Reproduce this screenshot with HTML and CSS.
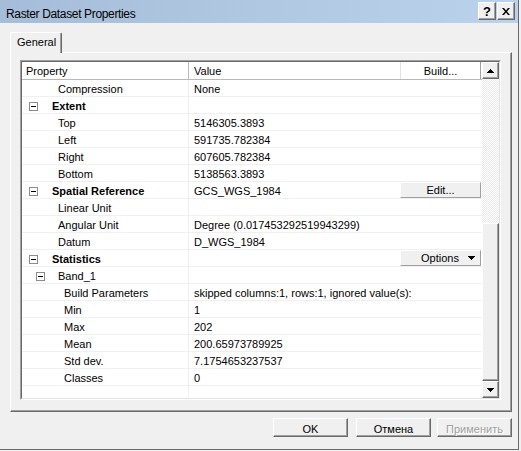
FILE: index.html
```html
<!DOCTYPE html>
<html lang="en">
<head>
    <meta charset="UTF-8">
    <title>Raster Dataset Properties</title>
    <link rel="stylesheet" href="styles.css">
</head>
<body>
<div class="window">
    <div class="titlebar">
        <span class="title">Raster Dataset Properties</span>
        <div class="cap-btns">
            <span class="raised cap-btn">?</span>
            <span class="raised cap-btn">
                <svg width="8" height="7" viewBox="0 0 8 7"><path d="M0 0h2l2 2.4L6 0h2L5 3.5 8 7H6L4 4.6 2 7H0l3-3.5z" fill="#000"/></svg>
            </span>
        </div>
    </div>

    <div class="content">
        <div class="tabs">
            <span class="tab">General</span>
        </div>

        <div class="panel">
            <div class="grid">
                <div class="grid-inner">
                    <div class="grid-main">
                        <div class="row head">
                            <div class="prop">Property</div>
                            <div class="val">Value<span class="head-btn">Build...</span></div>
                        </div>
                        <div class="row">
                            <div class="prop lvl1">Compression</div>
                            <div class="val">None</div>
                        </div>
                        <div class="row">
                            <div class="prop cat"><span class="exp"></span>Extent</div>
                            <div class="val"></div>
                        </div>
                        <div class="row">
                            <div class="prop lvl1">Top</div>
                            <div class="val">5146305.3893</div>
                        </div>
                        <div class="row">
                            <div class="prop lvl1">Left</div>
                            <div class="val">591735.782384</div>
                        </div>
                        <div class="row">
                            <div class="prop lvl1">Right</div>
                            <div class="val">607605.782384</div>
                        </div>
                        <div class="row">
                            <div class="prop lvl1">Bottom</div>
                            <div class="val">5138563.3893</div>
                        </div>
                        <div class="row">
                            <div class="prop cat"><span class="exp"></span>Spatial Reference</div>
                            <div class="val">GCS_WGS_1984<span class="cell-btn">Edit...</span></div>
                        </div>
                        <div class="row">
                            <div class="prop lvl1">Linear Unit</div>
                            <div class="val"></div>
                        </div>
                        <div class="row">
                            <div class="prop lvl1">Angular Unit</div>
                            <div class="val">Degree (0.017453292519943299)</div>
                        </div>
                        <div class="row">
                            <div class="prop lvl1">Datum</div>
                            <div class="val">D_WGS_1984</div>
                        </div>
                        <div class="row">
                            <div class="prop cat"><span class="exp"></span>Statistics</div>
                            <div class="val">
                                <span class="cell-btn opt">Options
                                    <svg width="7" height="4" viewBox="0 0 7 4"><path d="M0 0h7v1H6v1H5v1H4v1H3V3H2V2H1V1H0z" fill="#000"/></svg>
                                </span>
                            </div>
                        </div>
                        <div class="row">
                            <div class="prop"><span class="exp sub"></span>Band_1</div>
                            <div class="val"></div>
                        </div>
                        <div class="row">
                            <div class="prop lvl2">Build Parameters</div>
                            <div class="val">skipped columns:1, rows:1, ignored value(s):</div>
                        </div>
                        <div class="row">
                            <div class="prop lvl2">Min</div>
                            <div class="val">1</div>
                        </div>
                        <div class="row">
                            <div class="prop lvl2">Max</div>
                            <div class="val">202</div>
                        </div>
                        <div class="row">
                            <div class="prop lvl2">Mean</div>
                            <div class="val">200.65973789925</div>
                        </div>
                        <div class="row">
                            <div class="prop lvl2">Std dev.</div>
                            <div class="val">7.1754653237537</div>
                        </div>
                        <div class="row">
                            <div class="prop lvl2">Classes</div>
                            <div class="val">0</div>
                        </div>
                        <div class="row last">
                            <div class="prop"></div>
                            <div class="val"></div>
                        </div>
                    </div>

                    <div class="scrollbar">
                        <span class="raised sb-btn">
                            <svg width="7" height="4" viewBox="0 0 7 4"><path d="M3 0h1v1h1v1h1v1h1v1H0V3h1V2h1V1h1z" fill="#000"/></svg>
                        </span>
                        <span class="sb-track"></span>
                        <span class="raised sb-thumb"></span>
                        <span class="raised sb-btn">
                            <svg width="7" height="4" viewBox="0 0 7 4"><path d="M0 0h7v1H6v1H5v1H4v1H3V3H2V2H1V1H0z" fill="#000"/></svg>
                        </span>
                    </div>
                </div>
            </div>
        </div>

        <div class="buttons">
            <span class="raised btn btn-ok">OK</span>
            <span class="raised btn btn-cancel">Отмена</span>
            <span class="raised btn disabled">Применить</span>
        </div>
    </div>
</div>
</body>
</html>
```

FILE: styles.css
```css
body {
    margin: 0;
    font-family: "Liberation Sans", Arial, sans-serif;
    font-size: 11px;
    color: #000;
    background: #f0f0f0;
}
.window {
    width: 521px;
    height: 451px;
    box-sizing: border-box;
    background: #f0f0f0;
    box-shadow: inset -2px -1px 0 #f0f0f0, inset -3px -2px 0 #696969;
}
.raised {
    box-sizing: border-box;
    background: #f0f0f0;
    border: 1px solid;
    border-color: #fff #696969 #696969 #fff;
    box-shadow: inset -1px -1px 0 #a0a0a0;
}

/* title bar */
.titlebar {
    display: flex;
    width: 518px;
    height: 23px;
    box-sizing: border-box;
    padding: 0 3px 0 6px;
    background: linear-gradient(to right, #a6bdd9, #bad2eb);
}
.title {
    flex: 1;
    font-size: 12px;
    letter-spacing: -0.35px;
    line-height: 14px;
    padding-top: 7px;
}
.cap-btns {
    display: flex;
    gap: 1px;
    padding-top: 2px;
}
.cap-btn {
    width: 18px;
    height: 18px;
    display: flex;
    align-items: center;
    justify-content: center;
    font-size: 13px;
    font-weight: bold;
}

/* tab + panel */
.content {
    padding: 9px 9px 0 10px;
}
.tabs {
    display: flex;
    height: 20px;
}
.tab {
    position: relative;
    z-index: 1;
    width: 52px;
    height: 21px;
    box-sizing: border-box;
    padding-left: 6px;
    line-height: 19px;
    background: #f0f0f0;
    border: 1px solid #fff;
    border-bottom: none;
    border-right-color: #696969;
    border-radius: 2px 2px 0 0;
    box-shadow: inset -1px 0 0 #a0a0a0;
}
.panel {
    width: 502px;
    height: 360px;
    box-sizing: border-box;
    padding: 7px 0 0 9px;
    border: 1px solid;
    border-color: #fff #696969 #696969 #fff;
    box-shadow: inset -1px -1px 0 #a0a0a0;
}

/* property grid */
.grid {
    width: 481px;
    height: 340px;
    box-sizing: border-box;
    border: 1px solid;
    border-color: #a0a0a0 #fff #fff #a0a0a0;
}
.grid-inner {
    display: flex;
    height: 100%;
    box-sizing: border-box;
    border: 1px solid;
    border-color: #696969 #e3e3e3 #e3e3e3 #696969;
    background: #fff;
}
.grid-main {
    flex: 1;
    min-width: 0;
    overflow: hidden;
}
.row {
    display: flex;
    height: 17px;
    box-sizing: border-box;
    border-bottom: 1px solid #f0f0f0;
    line-height: 18px;
    white-space: nowrap;
}
.row.head {
    height: 18px;
    border-bottom-color: #b9b9b9;
}
.row.last {
    height: 12px;
    border-bottom: none;
}
.prop {
    flex: none;
    display: flex;
    width: 167px;
    box-sizing: border-box;
    border-right: 1px solid #f0f0f0;
}
.head .prop {
    padding-left: 4px;
    border-right-color: #b9b9b9;
}
.val {
    flex: 1;
    display: flex;
    min-width: 0;
    padding-left: 5px;
}
.cat {
    font-weight: bold;
}
.lvl1 {
    padding-left: 36px;
}
.lvl2 {
    padding-left: 42px;
}
.exp {
    position: relative;
    flex: none;
    width: 9px;
    height: 9px;
    box-sizing: border-box;
    margin: 5px 14px 0 7px;
    border: 1px solid #8c8c8c;
    background: #fff;
}
.exp.sub {
    margin: 5px 13px 0 14px;
}
.exp::after {
    content: "";
    position: absolute;
    left: 1px;
    top: 3px;
    width: 5px;
    height: 1px;
    background: #000;
}
.head-btn {
    margin: 0 1px 0 auto;
    width: 81px;
    box-sizing: border-box;
    text-align: center;
    border-left: 1px solid #e3e3e3;
    border-right: 1px solid #a0a0a0;
}
.cell-btn {
    margin: 0 1px 0 auto;
    width: 81px;
    height: 16px;
    box-sizing: border-box;
    line-height: 14px;
    text-align: center;
    background: #f0f0f0;
    border: 1px solid;
    border-color: #fff #a0a0a0 #a0a0a0 #fff;
}
.cell-btn.opt {
    display: flex;
    align-items: center;
    padding-left: 20px;
}
.opt svg {
    margin-left: 9px;
}

/* scrollbar */
.scrollbar {
    flex: none;
    display: flex;
    flex-direction: column;
    width: 17px;
}
.sb-btn {
    flex: none;
    height: 17px;
    display: flex;
    align-items: center;
    justify-content: center;
}
.sb-track {
    flex: none;
    height: 144px;
    background: conic-gradient(#fff 0 25%, #ececec 0 50%, #fff 0 75%, #ececec 0) 0 0 / 2px 2px;
}
.sb-thumb {
    flex: 1;
}

/* dialog buttons */
.buttons {
    display: flex;
    justify-content: flex-end;
    margin-top: 6px;
}
.btn {
    width: 75px;
    height: 19px;
    padding-top: 2px;
    line-height: 16px;
    text-align: center;
}
.btn-ok {
    margin-right: 8px;
}
.btn-cancel {
    margin-right: 6px;
}
.disabled {
    color: #a0a0a0;
    text-shadow: 1px 1px 0 #fff;
}
```
